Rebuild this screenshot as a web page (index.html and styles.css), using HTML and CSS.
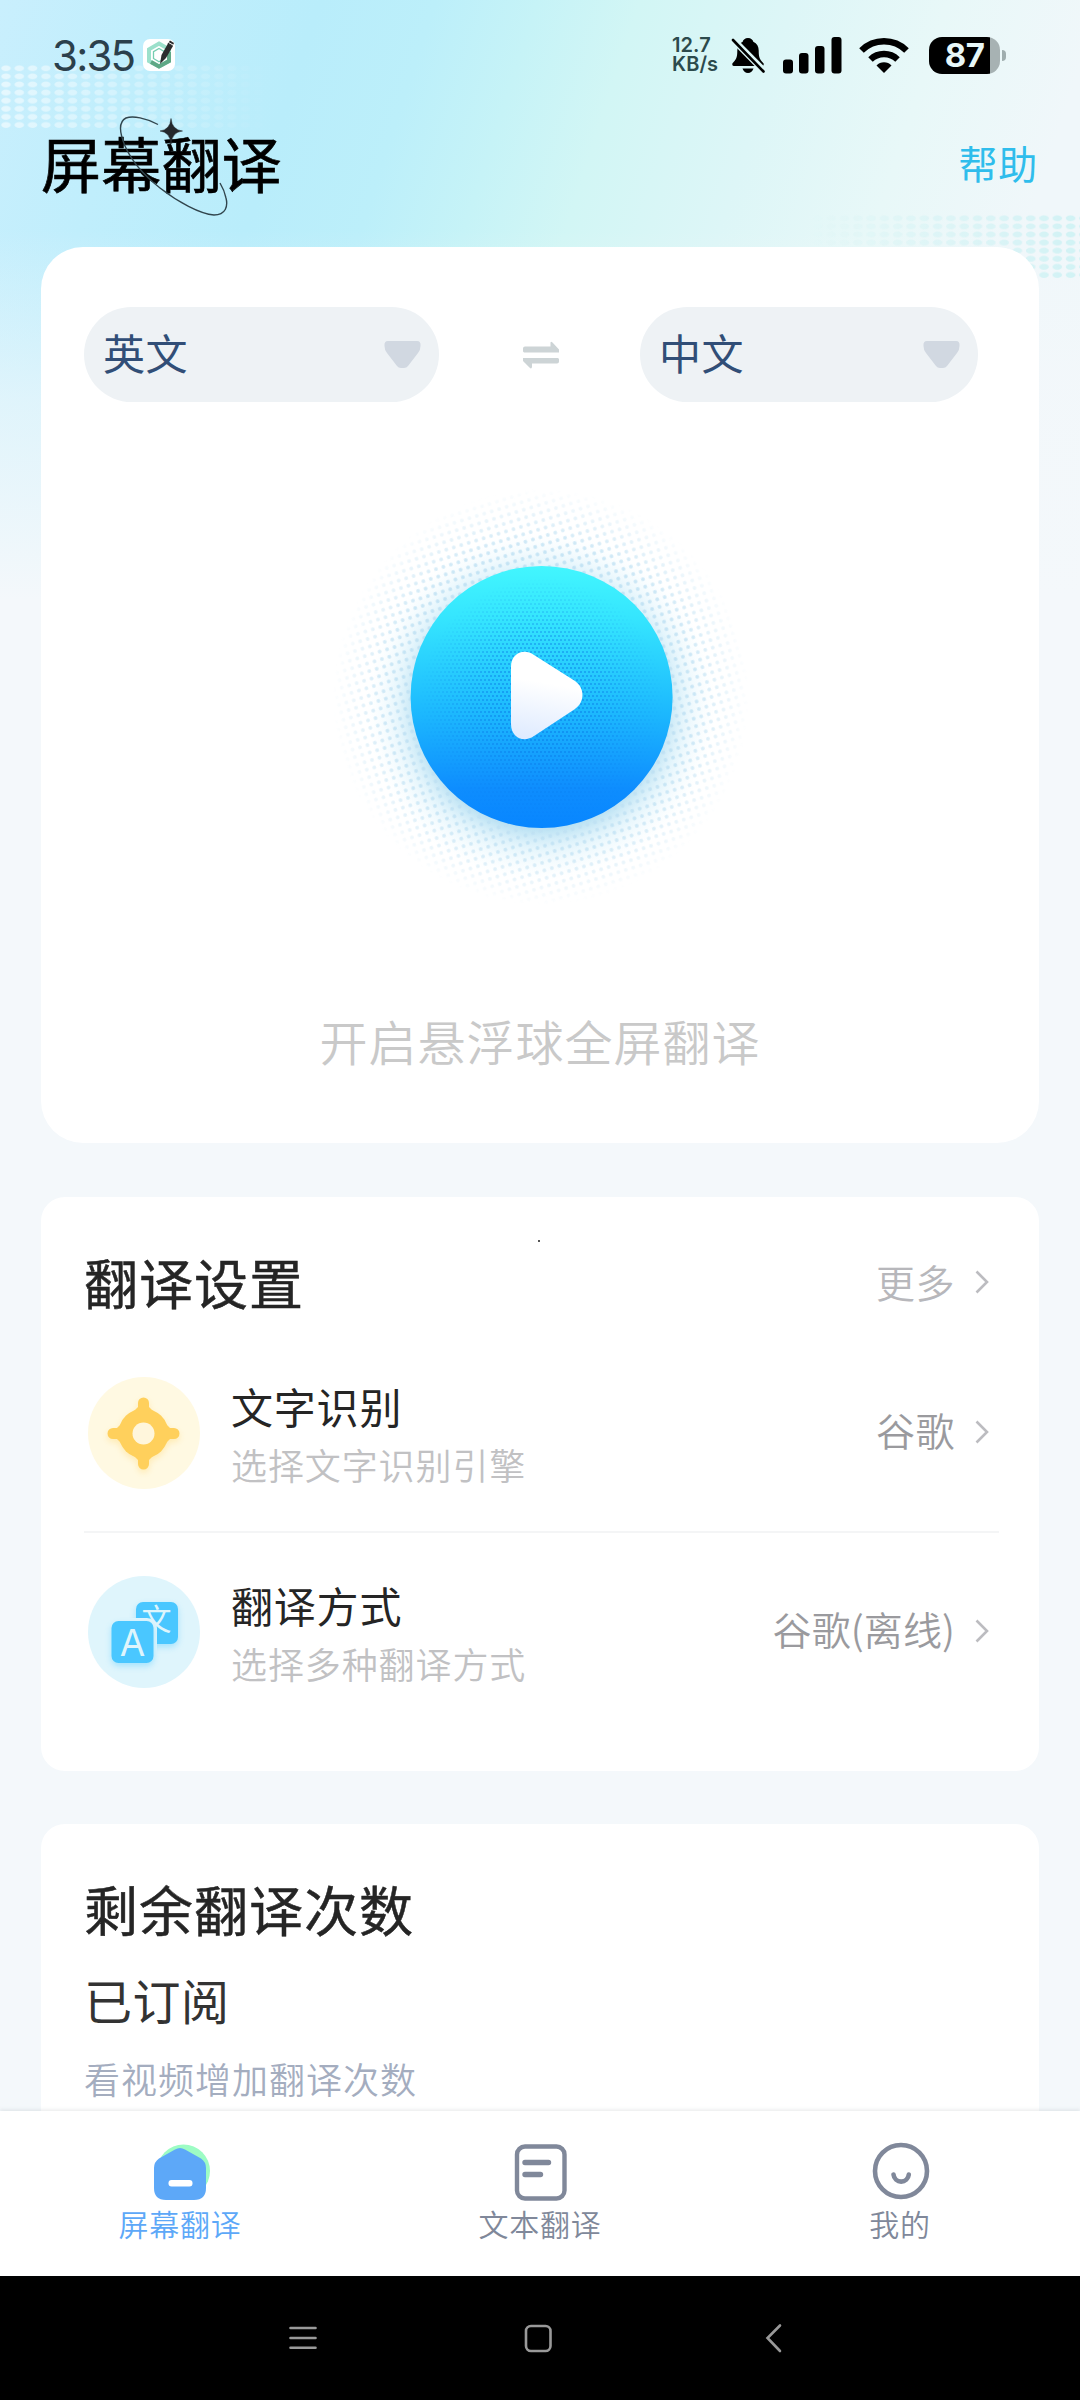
FILE: index.html
```html
<!DOCTYPE html>
<html lang="zh-CN">
<head>
<meta charset="utf-8">
<title>屏幕翻译</title>
<link rel="stylesheet" href="styles.css">
</head>
<body>
<div class="screen">
  <svg class="backdrop-dots" width="1080" height="300" viewBox="0 0 1080 300">
    <defs>
      <pattern id="dotL" width="13.3" height="8.1" patternUnits="userSpaceOnUse" y="64"><ellipse cx="6" cy="4.2" rx="4.800" ry="2.900" fill="#fff"/></pattern>
      <pattern id="dotR" width="13.3" height="8.1" patternUnits="userSpaceOnUse" y="214"><ellipse cx="6.6" cy="4.2" rx="4.800" ry="2.900" fill="#c3f0f2"/></pattern>
      <linearGradient id="fadeL"><stop offset="0" stop-color="#fff" stop-opacity=".55"/><stop offset="1" stop-color="#fff" stop-opacity="0"/></linearGradient>
      <linearGradient id="fadeR"><stop offset="0" stop-color="#fff" stop-opacity="0"/><stop offset="1" stop-color="#fff" stop-opacity=".7"/></linearGradient>
      <mask id="maskL"><rect x="0" y="64" width="270" height="64" fill="url(#fadeL)"/></mask>
      <mask id="maskR"><rect x="810" y="214" width="270" height="65" fill="url(#fadeR)"/></mask>
    </defs>
    <rect x="0" y="64" width="270" height="64" fill="url(#dotL)" mask="url(#maskL)"/>
    <rect x="810" y="214" width="270" height="65" fill="url(#dotR)" mask="url(#maskR)"/>
  </svg>

  <div class="status">
    <span class="clock">3:35</span>
    <svg class="app-icon" width="32" height="32" viewBox="0 0 32 32">
      <rect width="32" height="32" rx="7" fill="#fff"/>
      <path d="M16 4.500 26 10.300V22L16 27.500 6 22V10.300z" fill="none" stroke="#9ce0cb" stroke-width="4"/>
      <path d="M26 13v9L16 27.500 8 23" fill="none" stroke="#5fa886" stroke-width="4"/>
      <path d="M16 9.500 21.500 12.700V19.500L16 22.700 10.500 19.500V12.700z" fill="none" stroke="#75cdb0" stroke-width="1.300"/>
      <path d="M17 25 18.500 16 25 4.500 30 7 23 19z" fill="#2b2c2d"/><path d="M24.500 5 27 1.500 31 4 29.500 7z" fill="#2b2c2d"/><path d="M25.500 3.500 30 6" stroke="#fff" stroke-width="1"/>
    </svg>
    <span class="net"><span>12.7</span><span>KB/s</span></span>
    <svg class="bell" width="34" height="37" viewBox="0 0 34 37">
      <path d="M17 1c-3 0-4.800 1.800-5.300 3.800C8 6.500 6.300 9.500 6.300 13.500c0 7-1 9-4.600 12.500-.8 1-.5 3 1 3h28.600c1.500 0 1.800-2 1-3-3.600-3.500-4.600-5.500-4.600-12.500 0-4-1.700-7-5.400-8.700C21.800 2.800 20 1 17 1z"/>
      <path d="M11.500 31.500h11c-.8 2.600-2.900 4.500-5.500 4.500s-4.700-1.900-5.500-4.500z"/>
      <path d="M2 2.500 33 34" stroke="#dcf7f7" stroke-width="6.500"/><path d="M2 3 32.500 34.500" stroke="#000" stroke-width="2.600" stroke-linecap="round"/>
    </svg>
    <svg class="signal" width="59" height="37" viewBox="0 0 59 37">
      <rect x="0" y="22.500" width="10" height="14" rx="3"/><rect x="16" y="16" width="9.500" height="20.500" rx="3"/><rect x="32" y="9" width="9.500" height="27.500" rx="3"/><rect x="48.500" y="0" width="10" height="36.500" rx="3"/>
    </svg>
    <svg class="wifi" width="50" height="36" viewBox="0 0 50 36">
      <path d="M2.500 13.500a32 32 0 0 1 45 0M11.500 22.500a19.500 19.500 0 0 1 27 0" fill="none" stroke="#000" stroke-width="6.500"/>
      <path d="M25 36 17.500 28.500a10.500 10.500 0 0 1 15 0z"/>
    </svg>
    <span class="battery"><span class="level">87</span></span><i class="nub"></i>
  </div>

  <header class="header">
    <h1 class="title">屏幕翻译
      <svg class="orbit" width="120" height="110" viewBox="115 110 120 110">
        <path d="M158 124.500C146 118 133 115.500 126 118C118 122 120 134 125 146C132 162 146 177 160 188C178 202 200 214 214 215C226 215 228 206 226 198C225 193 223 188 220 183" fill="none" stroke="#31454d" stroke-width="1.400"/>
        <path d="M171 118.500Q172 130 182.500 131Q172 132 171 144Q170 132 160 131Q170 130 171 118.500z" fill="#24282c" stroke="#24282c" stroke-width=".5"/>
      </svg>
    </h1>
    <a class="help">帮助</a>
  </header>

  <main class="content">
    <section class="card hero">
      <div class="langs">
        <div class="pill from"><span>英文</span>
          <svg width="37" height="27" viewBox="0 0 37 27"><path d="M4 0H33Q37 0 36.500 5Q36.500 9 34 12L24 25Q22.500 27 20 27H17Q14.500 27 13 25L3 12Q.5 9 .5 5Q0 0 4 0z" fill="#d1d8e1"/></svg></div>
        <svg class="swap" width="38" height="28" viewBox="0 0 38 28"><path d="M1 10.500V7.500Q1 5.500 3 5.500H28.500V2Q28.500 0 30.500 1.500L37 8.500V11.500H2zM37 18V20.500Q37 22.500 35 22.500H10V26Q9.500 28.500 7.500 26.500L1 20V17H36z" fill="#cdd4d6"/></svg>
        <div class="pill to"><span>中文</span>
          <svg width="37" height="27" viewBox="0 0 37 27"><path d="M4 0H33Q37 0 36.500 5Q36.500 9 34 12L24 25Q22.500 27 20 27H17Q14.500 27 13 25L3 12Q.5 9 .5 5Q0 0 4 0z" fill="#d1d8e1"/></svg></div>
      </div>
      <svg class="play" width="440" height="440" viewBox="0 0 440 440">
        <defs>
          <pattern id="halftone" width="7.800" height="7.800" patternUnits="userSpaceOnUse" patternTransform="rotate(-17)"><circle cx="3.900" cy="3.900" r="1.900" fill="#bfe1f3"/></pattern>
          <pattern id="fine" width="4" height="8" patternUnits="userSpaceOnUse"><circle cx="1" cy="2" r="1" fill="#0873e6"/><circle cx="3" cy="6" r="1" fill="#0873e6"/></pattern>
          <radialGradient id="haloFade" gradientUnits="userSpaceOnUse" cx="221" cy="227" r="208"><stop offset=".62" stop-color="#fff"/><stop offset=".75" stop-color="#fff" stop-opacity=".75"/><stop offset="1" stop-color="#fff" stop-opacity="0"/></radialGradient>
          <radialGradient id="glow" gradientUnits="userSpaceOnUse" cx="221" cy="236" r="174"><stop offset=".7" stop-color="#9ad4ee" stop-opacity=".7"/><stop offset=".82" stop-color="#c4e9f8" stop-opacity=".45"/><stop offset="1" stop-color="#e8f9ff" stop-opacity="0"/></radialGradient>
          <linearGradient id="disc" x1="0" y1="0" x2="0" y2="1"><stop offset="0" stop-color="#42f6fe"/><stop offset=".2" stop-color="#35e5fe"/><stop offset=".55" stop-color="#1dbafe"/><stop offset=".85" stop-color="#0e8dfe"/><stop offset="1" stop-color="#0886ff"/></linearGradient>
          <radialGradient id="fineFade"><stop offset="0" stop-color="#fff" stop-opacity=".75"/><stop offset=".5" stop-color="#fff" stop-opacity=".5"/><stop offset="1" stop-color="#fff" stop-opacity="0"/></radialGradient>
          <linearGradient id="tri" x1=".5" y1="0" x2=".35" y2="1"><stop offset=".35" stop-color="#fff"/><stop offset="1" stop-color="#dfebff"/></linearGradient>
          <mask id="haloMask"><circle cx="221" cy="227" r="208" fill="url(#haloFade)"/></mask>
          <mask id="fineMask"><circle cx="221.500" cy="230" r="122" fill="url(#fineFade)"/></mask>
        </defs>
        <circle cx="221" cy="236" r="174" fill="url(#glow)"/>
        <rect width="440" height="440" fill="url(#halftone)" mask="url(#haloMask)"/>
        <circle cx="221.600" cy="227" r="131" fill="url(#disc)"/>
        <rect x="90" y="95" width="263" height="263" fill="url(#fine)" mask="url(#fineMask)"/>
        <path d="M191 197C191 183 204 178 214 185L255 211C265 218 265 232 255 239L214 266C204 273 191 268 191 254z" fill="url(#tri)"/>
      </svg>
      <p class="hint">开启悬浮球全屏翻译</p>
    </section>

    <section class="card settings">
      <div class="head"><h2>翻译设置</h2><i class="speck"></i><span class="more">更多</span><svg class="chev" width="14" height="24" viewBox="0 0 14 24"><path d="M1.500 1.500 12 12 1.500 22.500"/></svg></div>
      <div class="row">
        <svg width="112" height="112" viewBox="0 0 112 112">
          <circle cx="56" cy="56" r="56" fill="#fff9e2"/>
          <g class="soft-yellow" fill="#ffd05c"><circle cx="55.500" cy="56.500" r="25"/><path d="M55.500 24.500 87.500 56.500 55.500 88.500 23.500 56.500z"/><path d="M55.500 26V87M25 56.500H86" stroke="#ffd05c" stroke-width="11" stroke-linecap="round"/></g>
          <circle cx="55.500" cy="56.500" r="11" fill="#fff6dc"/>
        </svg>
        <div class="label"><b>文字识别</b><small>选择文字识别引擎</small></div>
        <span class="value">谷歌</span><svg class="chev" width="14" height="24" viewBox="0 0 14 24"><path d="M1.500 1.500 12 12 1.500 22.500"/></svg>
      </div>
      <div class="row">
        <svg width="112" height="112" viewBox="0 0 112 112">
          <circle cx="56" cy="56" r="56" fill="#dff5fc"/>
          <g class="soft-blue"><rect x="48" y="26" width="42" height="42" rx="7" fill="#4ac7ff"/></g>
          <text x="68.500" y="54" class="glyph-wen">文</text>
          <rect x="21" y="42" width="48" height="48" rx="10" fill="#dff5fc"/>
          <g class="soft-blue"><rect x="23.500" y="45" width="42" height="42" rx="7" fill="#4ac7ff"/></g>
          <text x="44.500" y="80" class="glyph-a">A</text>
        </svg>
        <div class="label"><b>翻译方式</b><small>选择多种翻译方式</small></div>
        <span class="value offline">谷歌(离线)</span><svg class="chev" width="14" height="24" viewBox="0 0 14 24"><path d="M1.500 1.500 12 12 1.500 22.500"/></svg>
      </div>
    </section>

    <section class="card quota">
      <h2>剩余翻译次数</h2>
      <p class="state">已订阅</p>
      <p class="tip">看视频增加翻译次数</p>
    </section>
  </main>

  <nav class="tabs">
    <a class="tab active">
      <svg width="60" height="60" viewBox="0 0 60 60"><circle cx="33.500" cy="29" r="26.500" fill="#9dfcc4"/><path d="M25 7.500Q30 4.500 35 7.500L51 16.500Q56 20 56 26V46Q56 58 44 58H16Q4 58 4 46V26Q4 20 9 16.500z" fill="#5da8f8"/><rect x="18.500" y="38" width="24" height="6.500" rx="3" fill="#fff"/></svg>
      <span>屏幕翻译</span></a>
    <a class="tab">
      <svg width="60" height="60" viewBox="0 0 60 60" fill="none" stroke="#80889a" stroke-width="4.400" stroke-linecap="round"><rect x="7" y="4.500" width="47.500" height="52" rx="8"/><path d="M15 20.500H38.500M15 32.500H30.500" stroke-width="5.400"/></svg>
      <span>文本翻译</span></a>
    <a class="tab">
      <svg width="60" height="60" viewBox="0 0 60 60" fill="none" stroke="#80889a" stroke-width="4.600" stroke-linecap="round"><circle cx="31" cy="29" r="26"/><path d="M23.500 32.500A7.700 8 0 0 0 38.800 32.500"/></svg>
      <span>我的</span></a>
  </nav>

  <div class="sysnav">
    <svg width="30" height="30" viewBox="0 0 30 30"><path d="M2.500 5H27.500M2.500 15H27.500M2.500 24.700H27.500"/></svg>
    <svg width="30" height="30" viewBox="0 0 30 30"><rect x="3" y="3" width="24.500" height="25" rx="5"/></svg>
    <svg width="30" height="30" viewBox="0 0 30 30"><path d="M22 2.500 9.500 15 22 28"/></svg>
  </div>
</div>
</body>
</html>
```
FILE: styles.css
```css
* { box-sizing: border-box; margin: 0; padding: 0; }
body { width: 1080px; height: 2400px; overflow: hidden; font-family: "Noto Sans CJK SC", sans-serif; }
svg { display: block; flex: none; }
.screen {
  position: relative; width: 1080px; height: 2400px; display: flex; flex-direction: column;
  background:
    linear-gradient(180deg, rgba(244,248,251,0) 230px, rgba(244,248,251,.6) 400px, #f4f8fb 600px),
    linear-gradient(108deg, #c9effd 0, #c0eefc 12%, #b9edfb 25%, #bceffa 34%, #c6f3f7 42%, #d2f6f5 50%, #ddf6f7 62%, #e8f8f8 74%, #f0f7fa 86%) 0 0 / 1080px 620px no-repeat,
    #f4f8fb;
}
.backdrop-dots { position: absolute; left: 0; top: 0; }

.status { position: relative; height: 110px; flex: none; display: flex; align-items: center; padding-left: 52px; }
.clock { width: 91px; font: 400 42px/44px Inter, sans-serif; letter-spacing: -1.800px; color: #2b404c; padding-top: 1px; }
.net { margin-left: 497px; width: 60px; display: flex; flex-direction: column; font: 600 20px/19px Inter, sans-serif; letter-spacing: .1px; color: #2c4a4c; }
.bell { margin-left: -1px; }
.signal { margin-left: 18px; }
.wifi { margin-left: 17px; }
.battery { margin-left: 20px; width: 71px; height: 37px; border-radius: 13px; background: linear-gradient(90deg, #000 61px, #a7b2b3 61px); }
.level { display: block; width: 71px; text-align: center; font: 700 33px/37px Inter, sans-serif; letter-spacing: -.5px; color: #e7f7f8; }
.nub { width: 4px; height: 11px; margin-left: 2px; border-radius: 0 5px 5px 0; background: #a0aeaf; }

.header { position: relative; height: 103px; margin-bottom: 34px; flex: none; display: flex; align-items: center; justify-content: space-between; padding: 0 42px 0 41px; }
.title { position: relative; font-size: 60px; line-height: 72px; font-weight: 400; -webkit-text-stroke: .7px #000; color: #000; letter-spacing: .2px; }
.orbit { position: absolute; left: 74px; top: -16px; }
.help { font-size: 39px; line-height: 50px; letter-spacing: .7px; color: #2fbdec; }

.content { flex: 1; min-height: 0; overflow: hidden; padding: 0 41px; display: flex; flex-direction: column; position: relative; }
.card { background: #fff; flex: none; }
.hero { height: 896px; border-radius: 42px; padding-top: 60px; }
.langs { display: flex; align-items: center; padding-left: 43px; }
.pill { height: 95px; border-radius: 48px; background: #eef2f5; display: flex; align-items: center; justify-content: space-between; padding: 0 18px 0 19px; font-size: 42px; line-height: 50px; letter-spacing: .6px; color: #314e77; }
.pill span { margin-top: -5px; }
.from { width: 355px; }
.to { width: 338px; }
.swap { margin: 0 80px 0 83px; }
.play { margin: 68px 0 0 279px; }
.hint { margin-top: 100px; text-align: center; font-size: 48px; line-height: 60px; letter-spacing: 1px; font-weight: 350; color: #c9c9c9; }

.settings { height: 574px; margin-top: 54px; border-radius: 24px; padding: 48px 40px 0 43px; }
.head { height: 74px; margin-bottom: 14px; display: flex; align-items: center; }
h2 { font-size: 54px; line-height: 72px; font-weight: 400; -webkit-text-stroke: .5px #252525; color: #252525; letter-spacing: 1px; }
.speck { width: 2px; height: 2px; background: #555; align-self: flex-start; margin: -5px 0 0 234px; }
.more, .value { margin-left: auto; font-size: 39px; line-height: 50px; letter-spacing: .5px; color: #b7b7bb; font-weight: 350; margin-top: -2px; }
.value { color: #9a9a9e; margin-top: -6px; }
.offline { letter-spacing: .1px; }
.chev { margin: 0 10px 0 20px; fill: none; stroke: #bcbcc0; stroke-width: 2.600px; }
.row { height: 198px; display: flex; align-items: center; padding-left: 4px; }
.row + .row { border-top: 2px solid #f4f5f6; }
.row > svg:first-child { margin-top: 2px; }
.label { margin-left: 31px; padding-top: 6px; display: flex; flex-direction: column; line-height: 58px; }
.label b { font-size: 42px; font-weight: 400; color: #252525; letter-spacing: .8px; }
.label small { font-size: 36px; color: #c1c1c3; letter-spacing: .9px; font-weight: 350; }
.soft-yellow { filter: drop-shadow(0 3px 3px rgba(255,208,92,.35)); }
.soft-blue { filter: drop-shadow(0 3px 3px rgba(74,199,255,.4)); }
.glyph-wen { font-size: 30px; text-anchor: middle; fill: #dff5fc; }
.glyph-a { font: 400 37px Inter, sans-serif; text-anchor: middle; fill: #dff5fc; }

.quota { height: 400px; margin-top: 53px; border-radius: 24px; padding: 49px 43px 0; }
.state { margin-top: 24px; font-size: 48px; line-height: 60px; letter-spacing: .5px; color: #333; }
.tip { margin-top: 24px; font-size: 36px; line-height: 50px; letter-spacing: 1px; color: #a4adbf; font-weight: 350; }

.tabs { position: relative; height: 165px; flex: none; display: flex; background: #fff; box-shadow: 0 -1px 4px rgba(60,70,80,.13); }
.tab { flex: 1; padding-top: 31px; display: flex; flex-direction: column; align-items: center; color: #80889a; font-size: 30px; line-height: 42px; letter-spacing: .8px; font-weight: 350; }
.active { color: #5da8f8; }
.sysnav { height: 124px; flex: none; background: #000; display: flex; align-items: center; justify-content: center; gap: 205px; padding-right: 4px; }
.sysnav svg { fill: none; stroke: #999; stroke-width: 2.600px; stroke-linecap: round; }
```
